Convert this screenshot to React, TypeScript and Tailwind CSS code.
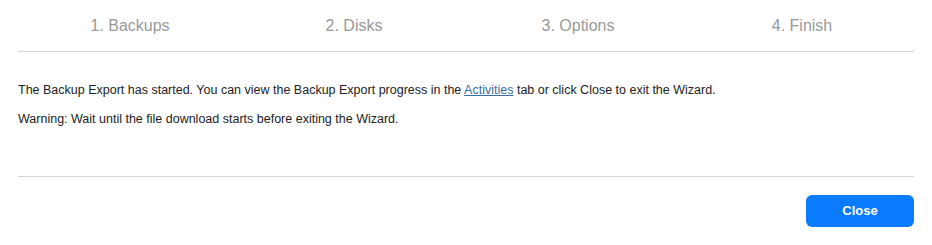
export default function App() {
  const steps = ["1. Backups", "2. Disks", "3. Options", "4. Finish"]
  return (
    <div className="h-[245px] w-[932px] bg-white px-[18px] font-['Liberation_Sans',Arial,sans-serif]">
      <div className="grid h-[52px] grid-cols-4 border-b border-[#d3d3d3]">
        {steps.map((s) => (
          <div key={s} className="flex items-center justify-center text-[16px] text-[#999]">
            {s}
          </div>
        ))}
      </div>
      <div className="h-[125px] border-b border-[#d3d3d3] pt-[31px] text-[12.5px] text-[#222]">
        <p className="leading-[14px]">
          The Backup Export has started. You can view the Backup Export progress in the{" "}
          <a href="#" className="text-[#3a6ea5] underline">Activities</a> tab or click Close to exit the Wizard.
        </p>
        <p className="mt-[15px] leading-[14px]">
          Warning: Wait until the file download starts before exiting the Wizard.
        </p>
      </div>
      <div className="flex justify-end pt-[18px]">
        <button className="h-[32px] w-[108px] rounded-[6px] bg-[#0a7bff] text-[13px] font-bold text-white">
          Close
        </button>
      </div>
    </div>
  )
}
